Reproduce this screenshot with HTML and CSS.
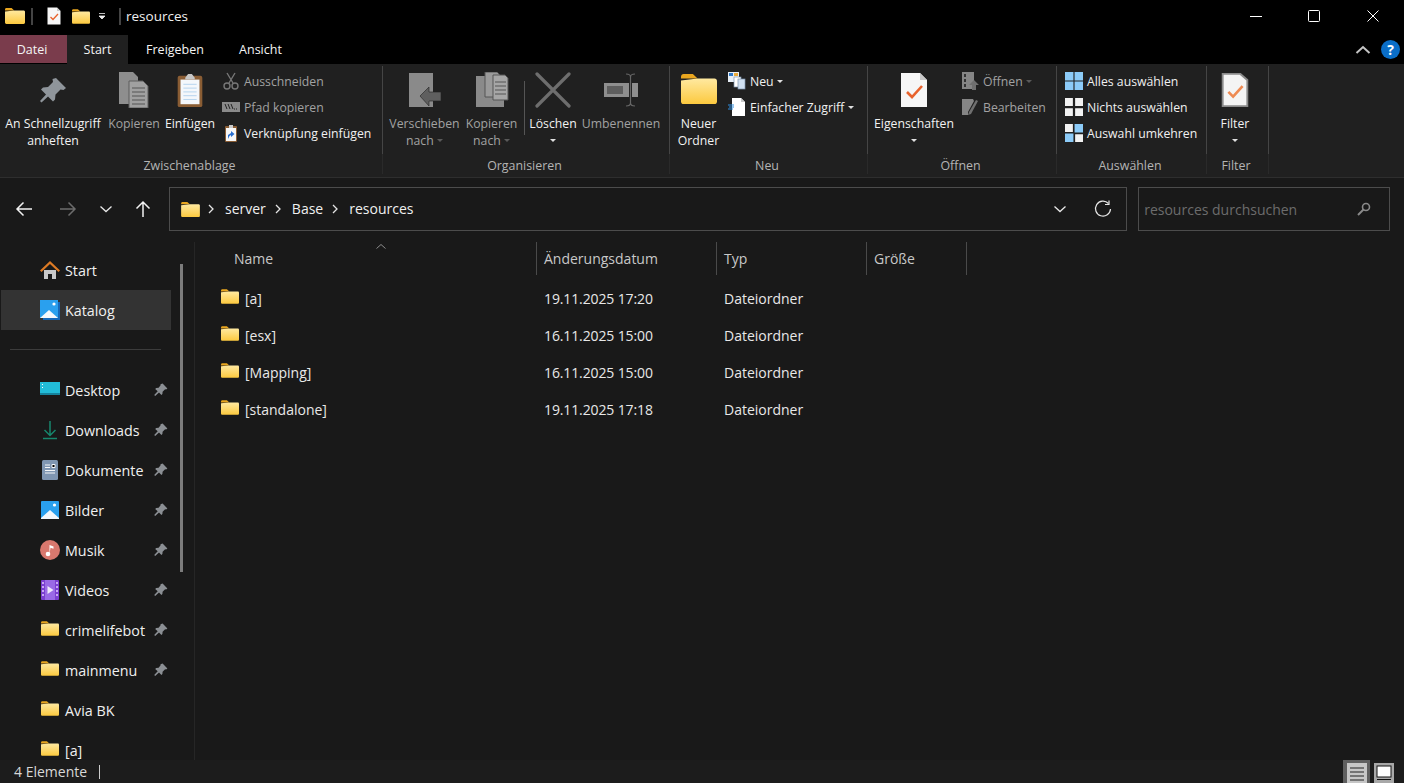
FILE: index.html
```html
<!DOCTYPE html>
<html lang="de">
  <head>
    <meta charset="UTF-8" />
    <title>resources</title>
    <link rel="stylesheet" href="styles.css">
  </head>
  <body>
    <!-- Shared icons -->
    <svg class="defs" width="0" height="0">
      <defs>
        <linearGradient id="fold" x1="0" y1="0" x2="0" y2="1">
          <stop offset="0" stop-color="#ffe9a0" />
          <stop offset="1" stop-color="#fcc93f" />
        </linearGradient>
        <symbol id="folder" viewBox="0 0 20 16">
          <path d="M0 1.5C0 .7.6 0 1.4 0h5.2l2.6 2.4H0z" fill="#e9a61f" />
          <path d="M0 3.4l9.2-1H18.6c.8 0 1.4.6 1.4 1.4v10.8c0 .8-.6 1.4-1.4 1.4H1.4C.6 16 0 15.4 0 14.6z" fill="url(#fold)" />
        </symbol>
        <symbol id="pin" viewBox="0 0 14 14">
          <path d="M8.6.6l4.8 4.8-1.3 1-1-.2-2.5 2.500-.2 2.400-1 1-2.400-2.500-3.800 3.400-1-.9 3.500-3.800-2.500-2.400 1-1 2.400-.2L6.600 2.200l-.1-1z" fill="#8b8f94" />
        </symbol>
        <symbol id="doccheck" viewBox="0 0 28 36">
          <path d="M1 1h19l7 7v27H1z" fill="#f6f6f6" />
          <path d="M20 1l7 7h-7z" fill="#c9c9c9" />
          <path d="M7 20l5 5 10-11" fill="none" stroke="#e8622c" stroke-width="2.6" />
        </symbol>
        <symbol id="chev" viewBox="0 0 8 10">
          <path d="M2 1l4 4-4 4" fill="none" stroke="#e4e4e4" stroke-width="1.3" />
        </symbol>
        <symbol id="chevdown" viewBox="0 0 14 8">
          <path d="M1.500 1.500L7 6.500l5.500-5" fill="none" stroke="#e8e8e8" stroke-width="1.3" />
        </symbol>
      </defs>
    </svg>

    <!-- Title bar -->
    <header class="titlebar">
      <svg class="t-folder"><use href="#folder" /></svg>
      <span class="t-sep"></span>
      <svg class="t-doc"><use href="#doccheck" /></svg>
      <svg class="t-folder2"><use href="#folder" /></svg>
      <svg class="t-caret" viewBox="0 0 8 8"><path d="M1 1.500h6M1 4h6L4 7z" fill="#eee" stroke="#eee" stroke-width=".8" /></svg>
      <span class="t-sep t-sep2"></span>
      <span class="title">resources</span>
      <div class="winbtns">
        <span class="winbtn"><svg width="12" height="12"><path d="M0 6.500h12" stroke="#fff" /></svg></span>
        <span class="winbtn"><svg width="12" height="12"><rect x=".5" y=".5" width="11" height="11" rx="1" fill="none" stroke="#fff" /></svg></span>
        <span class="winbtn"><svg width="12" height="12"><path d="M.5.5l11 11M11.500.5l-11 11" stroke="#fff" /></svg></span>
      </div>
    </header>

    <!-- Tabs -->
    <nav class="tabs">
      <a class="tab tab-file">Datei</a>
      <a class="tab tab-active">Start</a>
      <a class="tab tab-share">Freigeben</a>
      <a class="tab tab-view">Ansicht</a>
      <div class="tabs-right">
        <svg width="16" height="10" viewBox="0 0 16 10"><path d="M1.500 8L8 2l6.500 6" fill="none" stroke="#c4c4c4" stroke-width="2" /></svg>
        <span class="help">?</span>
      </div>
    </nav>

    <!-- Ribbon -->
    <section class="ribbon">
      <div class="group g-clip">
        <div class="group-body">
          <div class="big b-pin">
            <svg class="bigicon" viewBox="0 0 36 36"><path d="M21 6l10 10-2.500 2-3-.5-5 5-.5 5-2 2-5-5-6.500 6-1.500-1.500 6-6.500-5-5 2-2 5-.5 5-5-.5-3z" fill="#8f959b" /></svg>
            <span class="biglabel">An Schnellzugriff<br />anheften</span>
          </div>
          <div class="big b-copy dim">
            <svg class="bigicon" viewBox="0 0 32 36"><path d="M1 0h14l5 5v27H1z" fill="#8e8e8e" /><path d="M11 9h14l5 5v22H11z" fill="#a0a0a0" stroke="#5c5c5c" /><path d="M14 16h13M14 20h13M14 24h13M14 28h13M14 32h13" stroke="#555" /></svg>
            <span class="biglabel">Kopieren</span>
          </div>
          <div class="big b-paste">
            <svg class="bigicon" viewBox="0 0 28 38"><rect x="1" y="4" width="26" height="33" rx="2" fill="#8a5d34" /><rect x="4" y="8" width="20" height="26" fill="#f4f7fb" /><path d="M7 13h14M7 17h14M7 21h14M7 25h14M7 29h14" stroke="#b4d3ee" /><path d="M9 6l3-4h4l3 4v2H9z" fill="#c6c6c6" /></svg>
            <span class="biglabel">Einfügen</span>
          </div>
          <div class="smalls s-clip">
            <div class="small dim">
              <svg class="smallicon" viewBox="0 0 18 18"><path d="M5 1l6 10M13 1L7 11" stroke="#777" stroke-width="1.400" /><circle cx="5" cy="14" r="3" fill="none" stroke="#777" stroke-width="1.400" /><circle cx="13" cy="14" r="3" fill="none" stroke="#777" stroke-width="1.400" /></svg>
              <span>Ausschneiden</span>
            </div>
            <div class="small dim">
              <svg class="smallicon" viewBox="0 0 18 18"><rect y="4" width="18" height="10" fill="#8a8a8a" /><path d="M3 6l2 5M6 6l2 5M9 6l2 5" stroke="#222" /><path d="M12 11h4" stroke="#222" stroke-dasharray="1 1" /></svg>
              <span>Pfad kopieren</span>
            </div>
            <div class="small">
              <svg class="smallicon" viewBox="0 0 18 18"><rect x="3" y="2" width="12" height="16" rx="1" fill="#8a5d34" /><rect x="4" y="4" width="10" height="13" fill="#f7f7f7" /><path d="M7 1h4v3H7z" fill="#ccc" /><path d="M6 15l0-4 3-2V7l3.500 3L9 13v-2l-1.500 1z" fill="#2a6fd0" /></svg>
              <span>Verknüpfung einfügen</span>
            </div>
          </div>
        </div>
        <div class="group-label">Zwischenablage</div>
      </div>

      <div class="group g-org">
        <div class="group-body">
          <div class="big b-move dim">
            <svg class="bigicon" viewBox="0 0 34 36"><path d="M1 1h24v34H1z" fill="#8a8a8a" /><path d="M12 24l9-9v5h12v9H21v5z" fill="#5f5f5f" stroke="#222" stroke-width=".6" /></svg>
            <span class="biglabel">Verschieben<br />nach <i class="caret caret-dim"></i></span>
          </div>
          <div class="big b-copyto dim">
            <svg class="bigicon" viewBox="0 0 34 36"><path d="M1 4h28v31H1z" fill="#8a8a8a" /><path d="M10 0h12l3 3v22H10z" fill="#9a9a9a" stroke="#555" /><path d="M18 3h12l3 3v22H18z" fill="#a6a6a6" stroke="#555" /><path d="M20 10h11M20 14h11M20 18h11M20 22h11" stroke="#555" /></svg>
            <span class="biglabel">Kopieren<br />nach <i class="caret caret-dim"></i></span>
          </div>
          <span class="vsep"></span>
          <div class="big b-del">
            <svg class="bigicon" viewBox="0 0 36 36"><path d="M2 2l32 32M34 2L2 34" stroke="#6e6e6e" stroke-width="3.200" stroke-linecap="round" /></svg>
            <span class="biglabel">Löschen<br /><i class="caret"></i></span>
          </div>
          <div class="big b-ren dim">
            <svg class="bigicon" viewBox="0 0 36 36"><path d="M1 11h34v14H1z" fill="#8e8e8e" /><path d="M4 14h16v8H4z" fill="#5e5e5e" /><path d="M26 10h3v16h-3z" fill="#202020" /><path d="M23 2q4.500 0 4.500 3v26q0 3-4.500 3M32 2q-4.500 0-4.500 3M32 34q-4.500 0-4.500-3" fill="none" stroke="#666" stroke-width="1.200" /></svg>
            <span class="biglabel">Umbenennen</span>
          </div>
        </div>
        <div class="group-label">Organisieren</div>
      </div>

      <div class="group g-new">
        <div class="group-body">
          <div class="big b-newf">
            <svg class="bigicon" viewBox="0 0 20 16" preserveAspectRatio="none"><use href="#folder" /></svg>
            <span class="biglabel">Neuer<br />Ordner</span>
          </div>
          <div class="smalls s-new">
            <div class="small">
              <svg class="smallicon" viewBox="0 0 18 18"><rect width="11" height="10" fill="#e7eef6" /><path d="M1 1h4v3H1z" fill="#2d78c8" /><path d="M6 1h4v3H6z" fill="#e8a93a" /><rect x="6" y="5" width="7" height="10" fill="#fff" stroke="#7b93ad" stroke-width=".7" /><rect x="10" y="7" width="7" height="10" fill="#cfdff0" stroke="#7b93ad" stroke-width=".7" /></svg>
              <span>Neu <i class="caret"></i></span>
            </div>
            <div class="small">
              <svg class="smallicon" viewBox="0 0 18 18"><path d="M4 0h9l4 4v14H4z" fill="#fff" /><path d="M13 0l4 4h-4z" fill="#c8c8c8" /><path d="M0 7h6M1 9h5M0 11h5" stroke="#2f8ee0" /></svg>
              <span>Einfacher Zugriff <i class="caret"></i></span>
            </div>
          </div>
        </div>
        <div class="group-label">Neu</div>
      </div>

      <div class="group g-open">
        <div class="group-body">
          <div class="big b-prop">
            <svg class="bigicon" viewBox="0 0 28 36"><use href="#doccheck" /></svg>
            <span class="biglabel">Eigenschaften<br /><i class="caret"></i></span>
          </div>
          <div class="smalls s-open">
            <div class="small dim">
              <svg class="smallicon" viewBox="0 0 18 18"><rect x="1" width="12" height="17" fill="#858585" /><path d="M3 2h2v3H3zM3 7h2v3H3zM3 12h2v3H3z" fill="#333" /><path d="M13 8l5 5h-3v5h-4v-5H8z" fill="#6f6f6f" /></svg>
              <span>Öffnen <i class="caret caret-dim"></i></span>
            </div>
            <div class="small dim">
              <svg class="smallicon" viewBox="0 0 18 18"><path d="M1 1h11l1 2-6 11v3H1z" fill="#858585" /><path d="M15 2l2 1-7 13-3 1 1-3z" fill="#6f6f6f" /></svg>
              <span>Bearbeiten</span>
            </div>
          </div>
        </div>
        <div class="group-label">Öffnen</div>
      </div>

      <div class="group g-sel">
        <div class="group-body">
          <div class="smalls s-sel">
            <div class="small">
              <svg class="smallicon" viewBox="0 0 16 16"><path d="M0 0h7.500v7.500H0zM8.500 0H16v7.500H8.500zM0 8.500h7.500V16H0zM8.500 8.500H16V16H8.500z" fill="#8ccbf8" /></svg>
              <span>Alles auswählen</span>
            </div>
            <div class="small">
              <svg class="smallicon" viewBox="0 0 16 16"><path d="M0 0h7v7H0zM9 0h7v7H9zM0 9h7v7H0zM9 9h7v7H9z" fill="#f2f2f2" /></svg>
              <span>Nichts auswählen</span>
            </div>
            <div class="small">
              <svg class="smallicon" viewBox="0 0 16 16"><path d="M0 0h7v7H0zM9 9h7v7H9z" fill="#f2f2f2" /><path d="M8.500 0H16v7.500H8.500zM0 8.500h7.500V16H0z" fill="#8ccbf8" /></svg>
              <span>Auswahl umkehren</span>
            </div>
          </div>
        </div>
        <div class="group-label">Auswählen</div>
      </div>

      <div class="group g-filter">
        <div class="group-body">
          <div class="big b-filter">
            <svg class="bigicon" viewBox="0 0 30 38"><path d="M1 1h20l8 7v29H1z" fill="#8a8a8a" /><path d="M3 3h17l7 6v26H3z" fill="#f4f4f4" /><path d="M8 21l5 5 10-11" fill="none" stroke="#ee8a52" stroke-width="2.800" /></svg>
            <span class="biglabel">Filter<br /><i class="caret"></i></span>
          </div>
        </div>
        <div class="group-label">Filter</div>
      </div>
    </section>

    <!-- Address bar -->
    <section class="navbar">
      <div class="navbtns">
        <svg class="nav-back" width="18" height="16" viewBox="0 0 18 16"><path d="M17 8H2M8.500 1.500L2 8l6.500 6.500" fill="none" stroke="#f2f2f2" stroke-width="1.500" /></svg>
        <svg width="18" height="16" viewBox="0 0 18 16"><path d="M1 8h15M9.500 1.500L16 8l-6.500 6.500" fill="none" stroke="#6c6c6c" stroke-width="1.500" /></svg>
        <svg width="14" height="8"><use href="#chevdown" /></svg>
        <svg width="16" height="18" viewBox="0 0 16 18"><path d="M8 17V2M1.500 8.500L8 2l6.500 6.500" fill="none" stroke="#f2f2f2" stroke-width="1.500" /></svg>
      </div>
      <div class="address">
        <svg class="addr-folder"><use href="#folder" /></svg>
        <svg class="crumb-sep"><use href="#chev" /></svg>
        <span>server</span>
        <svg class="crumb-sep"><use href="#chev" /></svg>
        <span>Base</span>
        <svg class="crumb-sep"><use href="#chev" /></svg>
        <span>resources</span>
        <svg class="addr-down" width="14" height="8"><use href="#chevdown" /></svg>
        <svg class="addr-refresh" viewBox="0 0 18 18"><path d="M14.500 3.500A7.500 7.500 0 1 0 16.500 9" fill="none" stroke="#e6e6e6" stroke-width="1.200" /><path d="M15 .5v4h-4" fill="none" stroke="#e6e6e6" stroke-width="1.200" /></svg>
      </div>
      <div class="search">
        <span>resources durchsuchen</span>
        <svg width="14" height="14" viewBox="0 0 14 14"><circle cx="9" cy="5" r="3.500" fill="none" stroke="#8a8a8a" stroke-width="1.600" /><path d="M6.500 7.500L1 13" stroke="#8a8a8a" stroke-width="2" /></svg>
      </div>
    </section>

    <!-- Sidebar and files -->
    <main class="main">
      <aside class="sidebar">
        <div class="side-list">
          <div class="side-item">
            <svg class="side-icon" viewBox="0 0 20 20"><path d="M4 10h12v9h-4v-5H8v5H4z" fill="#c9c9c9" /><path d="M10 1L0 10.500l1.500 1.500L10 4l8.500 8 1.500-1.500z" fill="#dd7a24" /></svg>
            <span>Start</span>
          </div>
          <div class="side-item active">
            <svg class="side-icon" viewBox="0 0 20 20"><path d="M3 2h17v18H3z" fill="#1668b8" /><path d="M0 0h18v18H0z" fill="#2aa0ee" /><path d="M0 18l9-8 9 8z" fill="#f4f8fc" /><circle cx="14" cy="4" r="1.600" fill="#fff" /></svg>
            <span>Katalog</span>
          </div>
          <hr class="side-rule" />
          <div class="side-item">
            <svg class="side-icon" viewBox="0 0 20 20"><path d="M0 2h20v13H0z" fill="#22bcd8" /><path d="M0 13h20v2H0z" fill="#15829c" /><path d="M2 4h1v1H2zM2 7h1v1H2z" fill="#fff" /></svg>
            <span>Desktop</span>
            <svg class="side-pin"><use href="#pin" /></svg>
          </div>
          <div class="side-item">
            <svg class="side-icon" viewBox="0 0 20 20"><path d="M10 1v14M4.500 10l5.500 5.500 5.500-5.500M3 18.500h14" fill="none" stroke="#17876d" stroke-width="1.500" /></svg>
            <span>Downloads</span>
            <svg class="side-pin"><use href="#pin" /></svg>
          </div>
          <div class="side-item">
            <svg class="side-icon" viewBox="0 0 20 20"><rect x="2" width="16" height="20" rx="1.500" fill="#7f96b2" /><path d="M5 5h5M5 7.500h5M12 4.500h3v3h-3zM5 10.500h10M5 13h10" stroke="#f4f6f8" /></svg>
            <span>Dokumente</span>
            <svg class="side-pin"><use href="#pin" /></svg>
          </div>
          <div class="side-item">
            <svg class="side-icon" viewBox="0 0 20 20"><rect x="1" y="1" width="18" height="18" rx="1" fill="#2aa0ee" /><path d="M1 18l9-8 9 8v1H1z" fill="#f4f8fc" /><circle cx="14.500" cy="5" r="1.600" fill="#fff" /></svg>
            <span>Bilder</span>
            <svg class="side-pin"><use href="#pin" /></svg>
          </div>
          <div class="side-item">
            <svg class="side-icon" viewBox="0 0 20 20"><circle cx="10" cy="10" r="10" fill="#d9786e" /><circle cx="8" cy="14" r="2.300" fill="#fff" /><path d="M9.500 14V5l4 1.500v2.200l-3-1" fill="#fff" /></svg>
            <span>Musik</span>
            <svg class="side-pin"><use href="#pin" /></svg>
          </div>
          <div class="side-item">
            <svg class="side-icon" viewBox="0 0 20 20"><rect x="1" y="0" width="18" height="20" rx="1" fill="#7b3fd0" /><path d="M5 0h10v20H5z" fill="#9a6ae6" /><path d="M2 2h2v2H2zM2 6h2v2H2zM2 10h2v2H2zM2 14h2v2H2zM16 2h2v2h-2zM16 6h2v2h-2zM16 10h2v2h-2zM16 14h2v2h-2z" fill="#c9a8f5" /><path d="M7.500 6l6 4-6 4z" fill="#efe8fb" /></svg>
            <span>Videos</span>
            <svg class="side-pin"><use href="#pin" /></svg>
          </div>
          <div class="side-item">
            <svg class="side-folder"><use href="#folder" /></svg>
            <span>crimelifebot</span>
            <svg class="side-pin"><use href="#pin" /></svg>
          </div>
          <div class="side-item">
            <svg class="side-folder"><use href="#folder" /></svg>
            <span>mainmenu</span>
            <svg class="side-pin"><use href="#pin" /></svg>
          </div>
          <div class="side-item">
            <svg class="side-folder"><use href="#folder" /></svg>
            <span>Avia BK</span>
          </div>
          <div class="side-item">
            <svg class="side-folder"><use href="#folder" /></svg>
            <span>[a]</span>
          </div>
        </div>
        <div class="side-scroll"><span class="thumb"></span></div>
      </aside>

      <div class="files">
        <div class="file-head">
          <div class="col col-name">Name<svg class="sort" width="10" height="5"><path d="M.5 4.500L5 .5l4.500 4" fill="none" stroke="#8c8c8c" /></svg></div>
          <div class="col col-date">Änderungsdatum</div>
          <div class="col col-type">Typ</div>
          <div class="col col-size">Größe</div>
        </div>
        <div class="file-row">
          <div class="cell-name"><svg class="file-icon"><use href="#folder" /></svg>[a]</div>
          <div class="cell-date">19.11.2025 17:20</div>
          <div>Dateiordner</div>
        </div>
        <div class="file-row">
          <div class="cell-name"><svg class="file-icon"><use href="#folder" /></svg>[esx]</div>
          <div class="cell-date">16.11.2025 15:00</div>
          <div>Dateiordner</div>
        </div>
        <div class="file-row">
          <div class="cell-name"><svg class="file-icon"><use href="#folder" /></svg>[Mapping]</div>
          <div class="cell-date">16.11.2025 15:00</div>
          <div>Dateiordner</div>
        </div>
        <div class="file-row">
          <div class="cell-name"><svg class="file-icon"><use href="#folder" /></svg>[standalone]</div>
          <div class="cell-date">19.11.2025 17:18</div>
          <div>Dateiordner</div>
        </div>
      </div>
    </main>

    <!-- Status bar -->
    <footer class="status">
      <span>4 Elemente</span>
      <span class="status-sep"></span>
      <div class="views">
        <span class="view view-on">
          <svg width="20" height="20" viewBox="0 0 20 20"><rect width="20" height="20" fill="#c6c6c6" /><path d="M3 5h14M3 9h14M3 13h14M3 17h14" stroke="#222" stroke-width="1.200" /></svg>
        </span>
        <span class="view">
          <svg width="20" height="20" viewBox="0 0 20 20"><rect width="20" height="20" fill="#a8a8a8" /><rect x="3" y="3" width="14" height="11" fill="#fff" stroke="#111" /><path d="M3 16.500h14" stroke="#111" /></svg>
        </span>
      </div>
    </footer>
  </body>
</html>
```

FILE: styles.css
```css
html,
body {
  margin: 0;
  padding: 0;
  height: 100%;
}
body {
  width: 1404px;
  height: 783px;
  overflow: hidden;
  background-color: #191919;
  color: #f0f0f0;
  font-family: "Open Sans", "Noto Sans", sans-serif;
  font-size: 13px;
  display: flex;
  flex-direction: column;
}
.defs {
  display: block;
  height: 0;
}
svg {
  flex: none;
}

/* Title bar */
.titlebar {
  height: 35px;
  background-color: #000;
  display: flex;
  align-items: center;
  padding-left: 5px;
  padding-bottom: 3px;
  box-sizing: border-box;
  flex: none;
}
.t-folder {
  width: 20px;
  height: 16px;
}
.t-sep {
  width: 2px;
  height: 17px;
  background-color: #444;
  margin-left: 6px;
}
.t-doc {
  width: 14px;
  height: 18px;
  margin-left: 14px;
}
.t-folder2 {
  width: 18px;
  height: 15px;
  margin-left: 11px;
}
.t-caret {
  width: 8px;
  height: 8px;
  margin-left: 8px;
}
.t-sep2 {
  margin-left: 13px;
}
.title {
  margin-left: 5px;
  font-size: 13.5px;
}
.winbtns {
  margin-left: auto;
  margin-right: 2px;
  display: flex;
}
.winbtn {
  width: 58.5px;
  height: 30px;
  display: flex;
  align-items: center;
  justify-content: center;
}

/* Tabs */
.tabs {
  height: 29px;
  background-color: #000;
  display: flex;
  flex: none;
  align-items: stretch;
  position: relative;
}
.tab {
  display: flex;
  align-items: center;
  justify-content: center;
  font-size: 12.5px;
  color: #f4f4f4;
}
.tab-file {
  width: 64px;
  padding-right: 3px;
  background-color: #7a3c4c;
  height: 28px;
}
.tab-active {
  width: 61px;
  background-color: #202020;
}
.tab-share {
  width: 94px;
}
.tab-view {
  width: 77px;
}
.tabs-right {
  margin-left: auto;
  display: flex;
  align-items: center;
  gap: 10px;
  padding-right: 4px;
}
.help {
  width: 19px;
  height: 19px;
  border-radius: 50%;
  background-color: #0a6ec8;
  color: #fff;
  font-weight: 700;
  font-size: 14px;
  display: flex;
  align-items: center;
  justify-content: center;
}

/* Ribbon */
.ribbon {
  height: 114px;
  box-sizing: border-box;
  background-color: #202020;
  border-bottom: 1px solid #2e2e2e;
  display: flex;
  flex: none;
  padding-top: 2px;
}
.group {
  display: flex;
  flex-direction: column;
  box-sizing: border-box;
  border-right: 1px solid #2a2a2a;
  height: 108px;
}
.group-body {
  height: 89px;
  display: flex;
  margin-right: -1px;
  border-right: 1px solid #454545;
  box-sizing: border-box;
}
.group-label {
  text-align: center;
  font-size: 12.4px;
  color: #b4b4b4;
  line-height: 17px;
  margin-top: 3px;
  padding-right: 3px;
}
.g-clip {
  width: 383px;
}
.g-org {
  width: 287px;
}
.g-new {
  width: 198px;
}
.g-open {
  width: 189px;
}
.g-sel {
  width: 150px;
}
.g-filter {
  width: 62px;
}
.big {
  display: flex;
  flex-direction: column;
  align-items: center;
  text-align: center;
  flex: none;
  line-height: 17px;
  font-size: 12.25px;
  color: #f2f2f2;
}
.bigicon {
  width: 36px;
  height: 36px;
  margin-top: 6px;
  margin-bottom: 7px;
}
.biglabel {
  white-space: nowrap;
}
.dim,
.big.dim {
  color: #a2a2a2;
}
.b-pin {
  width: 106px;
}
.b-copy {
  width: 56px;
}
.b-paste {
  width: 56px;
}
.b-move {
  width: 83px;
}
.b-copyto {
  width: 51px;
}
.b-del {
  width: 56px;
}
.b-ren {
  width: 80px;
}
.b-newf {
  width: 57px;
  margin-left: 0;
}
.b-prop {
  width: 92px;
}
.b-filter {
  width: 56px;
}
.b-newf .bigicon {
  height: 30px;
  margin-top: 8px;
  margin-bottom: 11px;
}
.vsep {
  width: 1px;
  height: 54px;
  margin: 15px 0 0 7px;
  background-color: #555;
  flex: none;
}
.smalls {
  display: flex;
  flex-direction: column;
  padding-top: 2px;
}
.s-clip {
  margin-left: 4px;
}
.s-new {
  margin-left: 1px;
}
.s-open {
  margin-left: 1px;
}
.s-sel {
  margin-left: 8px;
}
.small {
  height: 26px;
  display: flex;
  align-items: center;
  gap: 4px;
  font-size: 12.25px;
  white-space: nowrap;
}
.smallicon {
  width: 18px;
  height: 18px;
}
.caret {
  display: inline-block;
  width: 0;
  height: 0;
  border-left: 3.5px solid transparent;
  border-right: 3.5px solid transparent;
  border-top: 3.5px solid #e0e0e0;
  vertical-align: 3px;
}
.caret-dim {
  border-top-color: #5a5a5a;
}

/* Address bar */
.navbar {
  height: 64px;
  box-sizing: border-box;
  padding: 9px 14px 11px 0;
  display: flex;
  flex: none;
}
.navbtns {
  width: 169px;
  flex: none;
  display: flex;
  align-items: center;
  box-sizing: border-box;
  padding-left: 15px;
  gap: 22px;
}
.nav-back {
  margin-right: 4px;
}
.address,
.search {
  height: 44px;
  box-sizing: border-box;
  border: 1px solid #4c4c4c;
  display: flex;
  align-items: center;
  font-size: 14px;
}
.address {
  width: 959px;
  padding-left: 11px;
  padding-bottom: 2px;
}
.addr-folder {
  width: 19px;
  height: 15px;
  margin-right: -1px;
  margin-top: 2px;
}
.crumb-sep {
  width: 8px;
  height: 10px;
  margin: 2px 10px 0 8px;
}
.addr-down {
  margin-left: auto;
  margin-top: 2px;
}
.addr-refresh {
  width: 18px;
  height: 18px;
  margin: 2px 14px 0 27px;
}
.search {
  width: 252px;
  margin-left: 11px;
  padding: 0 18px 0 5px;
  justify-content: space-between;
  color: #6c6c6c;
}

/* Sidebar */
.main {
  flex: 1;
  display: flex;
  min-height: 0;
}
.sidebar {
  width: 195px;
  flex: none;
  display: flex;
  overflow: hidden;
}
.side-list {
  width: 170px;
  margin-left: 1px;
  flex: none;
  padding-top: 8px;
}
.side-item {
  height: 40px;
  display: flex;
  align-items: center;
  font-size: 14.3px;
  position: relative;
  padding-left: 39px;
  box-sizing: border-box;
}
.side-item.active {
  background-color: #333;
}
.side-icon {
  width: 20px;
  height: 20px;
  margin-right: 5px;
}
.side-folder {
  width: 18px;
  height: 15px;
  margin: 0 6px 3px 1px;
}
.side-pin {
  width: 14px;
  height: 14px;
  margin-left: auto;
  margin-right: 3px;
}
.side-rule {
  border: 0;
  height: 1px;
  background-color: #3c3c3c;
  margin: 19px 10px 20px 9px;
}
.side-scroll {
  width: 24px;
  border-right: 1px solid #262626;
  box-sizing: border-box;
  padding: 22px 0 0 9px;
}
.thumb {
  display: block;
  width: 3px;
  height: 308px;
  background-color: #7c7c7c;
}

/* File list */
.files {
  flex: 1;
  padding-left: 26px;
  font-size: 14px;
  color: #e8e8e8;
}
.file-head {
  height: 33px;
  display: flex;
}
.col {
  box-sizing: border-box;
  display: flex;
  align-items: center;
  padding-left: 7px;
  border-right: 1px solid #4a4a4a;
  color: #c8c8c8;
  position: relative;
}
.col-name {
  width: 316px;
  padding-left: 13px;
}
.col-date {
  width: 180px;
}
.col-type {
  width: 150px;
}
.col-size {
  width: 100px;
}
.sort {
  position: absolute;
  top: 2px;
  left: 155px;
}
.file-row {
  height: 37px;
  display: flex;
  align-items: center;
}
.file-head + .file-row {
  margin-top: 5px;
}
.cell-name {
  width: 323px;
  display: flex;
  align-items: center;
}
.cell-date {
  width: 180px;
  letter-spacing: -.12px;
}
.file-icon {
  width: 18px;
  height: 15px;
  margin-right: 6px;
  margin-bottom: 4px;
}

/* Status bar */
.status {
  height: 23px;
  flex: none;
  background-color: #1c1c1c;
  display: flex;
  align-items: center;
  padding-left: 14px;
  font-size: 14px;
  color: #d8d8d8;
}
.status-sep {
  width: 1px;
  height: 14px;
  background-color: #ccc;
  margin-left: 12px;
}
.views {
  margin-left: auto;
  margin-right: 10px;
  display: flex;
  gap: 4px;
}
.view {
  width: 27px;
  height: 23px;
  display: flex;
  justify-content: center;
  align-items: flex-end;
}
.view + .view {
  width: 20px;
}
.view-on {
  background-color: #5f5f5f;
}
```
